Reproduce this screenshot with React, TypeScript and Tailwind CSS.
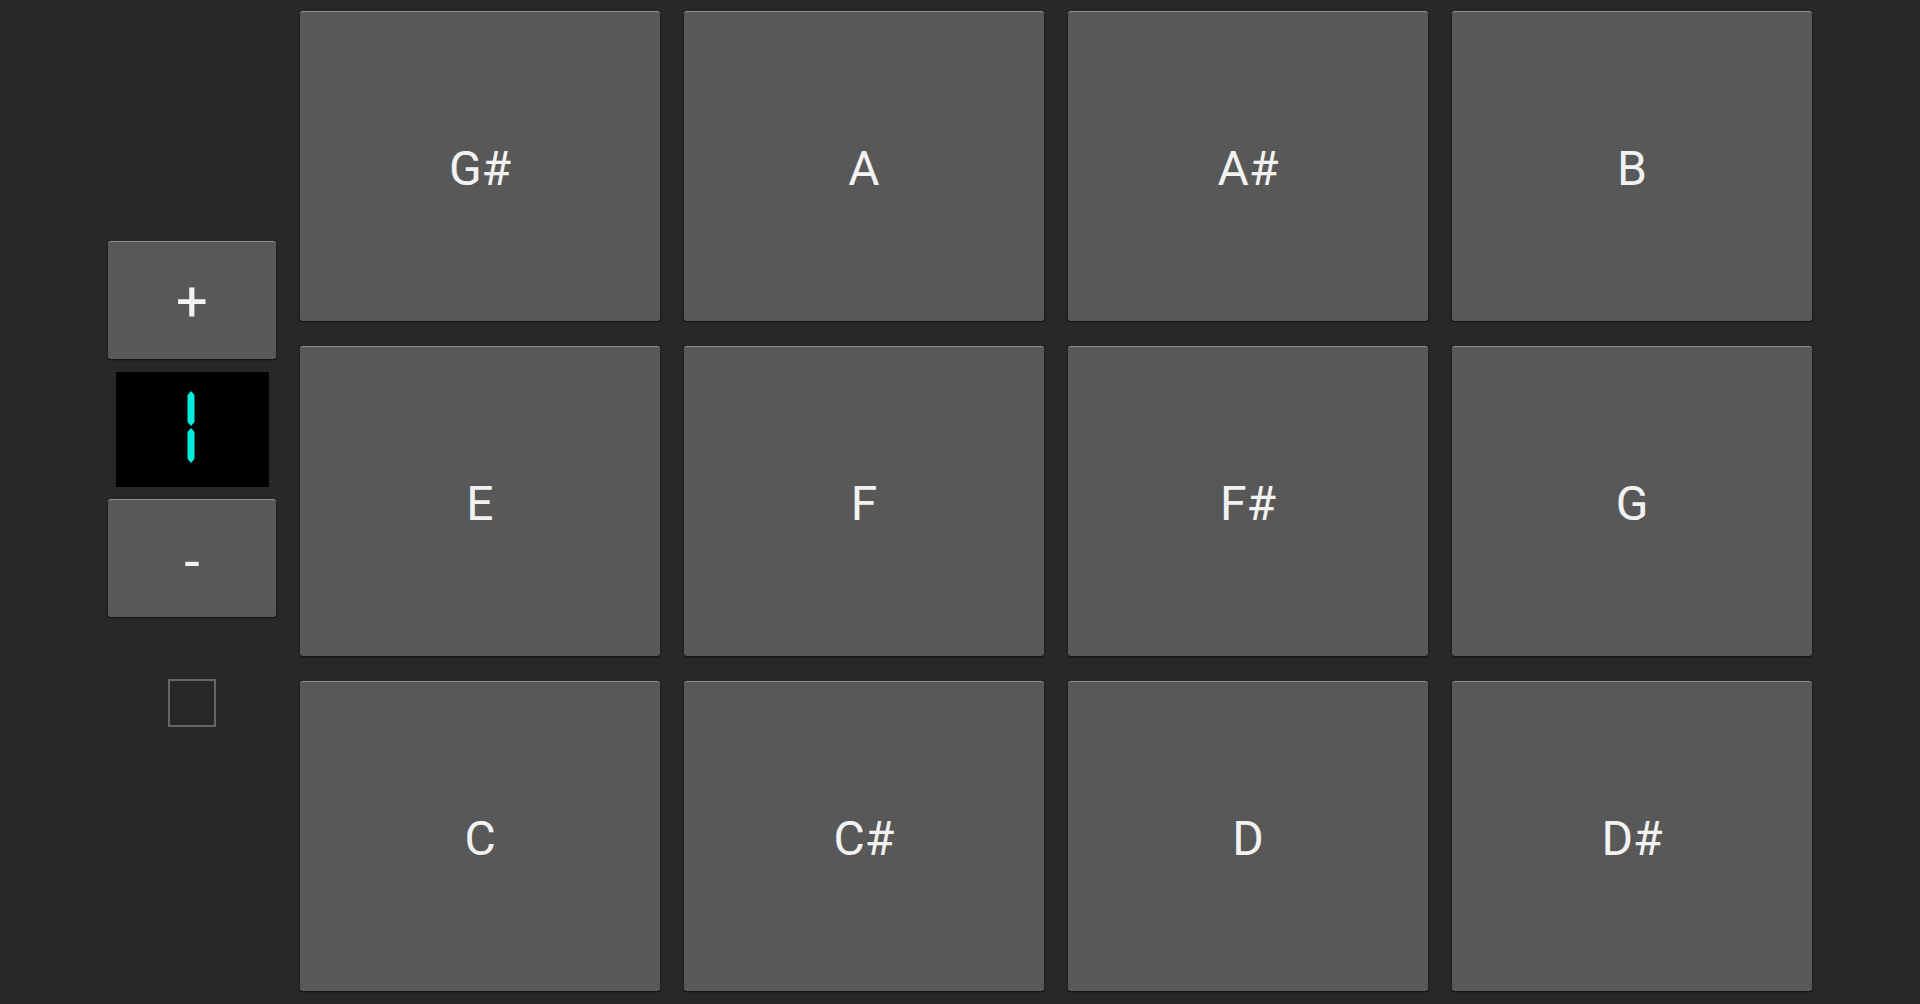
import React from 'react';

const NOTES = ['G#', 'A', 'A#', 'B', 'E', 'F', 'F#', 'G', 'C', 'C#', 'D', 'D#'];

const padClass =
  'flex items-center justify-center bg-[#585858] rounded-[3px] border-t border-t-[#8e8e8e] shadow-[0_1px_2px_rgba(0,0,0,0.6)] text-[#f2f2f2] select-none';

const SegmentOne = () => (
  <svg width="12" height="74" viewBox="0 0 12 74">
    <polygon points="6,0 9.5,4 9.5,31 6,35 2.5,31 2.5,4" fill="#00eedb" />
    <polygon points="6,37 9.5,41 9.5,68 6,72 2.5,68 2.5,41" fill="#00eedb" />
  </svg>
);

const App = () => {
  const [octave, setOctave] = React.useState(1);
  const [checked, setChecked] = React.useState(false);

  return (
    <div
      className="w-full h-[1004px] bg-[#282828] flex overflow-hidden"
      style={{ fontFamily: 'Roboto, "Liberation Sans", sans-serif' }}
    >
      {/* Octave controls */}
      <div className="ml-[108px] w-[168px] flex flex-col items-center pt-[241px]">
        <button
          onClick={() => setOctave(o => o + 1)}
          className={`${padClass} w-[168px] h-[118px] text-[56px] leading-none pt-[2px]`}
        >
          +
        </button>
        <div className="mt-[13px] w-[153px] h-[115px] bg-black flex items-center justify-center">
          <div className="mr-[3px] -mt-[4px] flex">
            {octave === 1 ? <SegmentOne /> : <span className="text-[#00eedb] text-[60px]">{octave}</span>}
          </div>
        </div>
        <button
          onClick={() => setOctave(o => o - 1)}
          className={`${padClass} mt-[12px] w-[168px] h-[118px] text-[56px] leading-none pt-[6px]`}
        >
          -
        </button>
        <button
          onClick={() => setChecked(c => !c)}
          className="mt-[62px] w-[48px] h-[48px] border-2 border-[#666666] bg-transparent"
        >
          {checked && <span className="text-[#f2f2f2] text-[32px]">✓</span>}
        </button>
      </div>

      {/* Note pads */}
      <div className="ml-[24px] pt-[11px] grid grid-cols-[repeat(4,360px)] auto-rows-[310px] gap-x-[24px] gap-y-[25px]">
        {NOTES.map(note => (
          <button key={note} className={`${padClass} text-[48px] pt-[4px]`}>
            {note}
          </button>
        ))}
      </div>
    </div>
  );
};

export default App;
